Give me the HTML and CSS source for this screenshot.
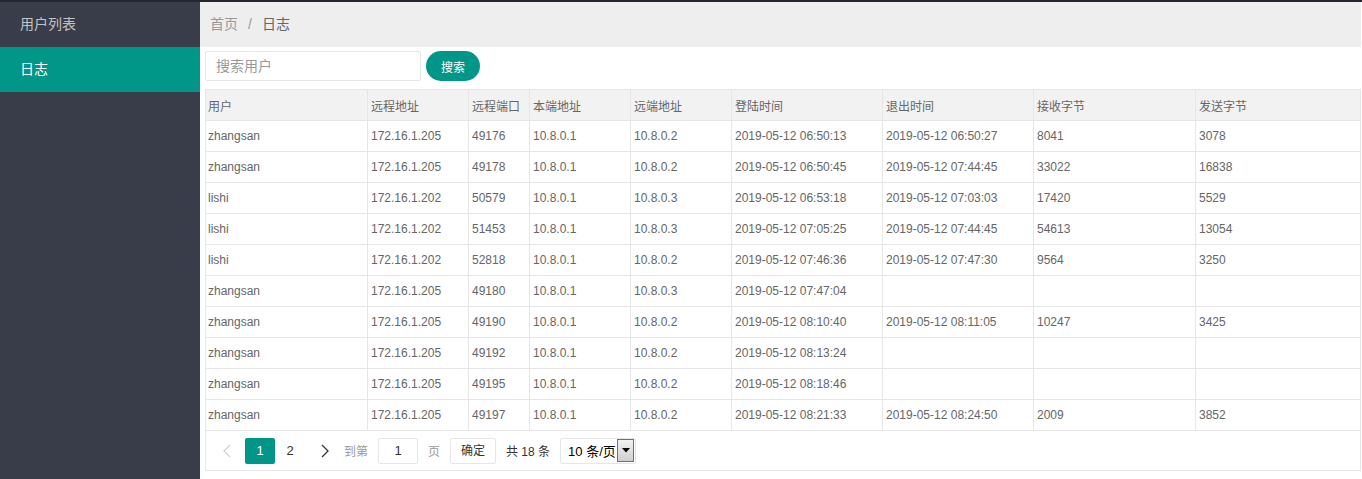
FILE: index.html
```html
<!DOCTYPE html>
<html lang="zh">
<head>
<meta charset="utf-8">
<title>日志</title>
<link rel="stylesheet" href="styles.css">
</head>
<body>
<div class="topbar"></div>
<div class="layout">
  <aside class="sidebar">
    <div class="nav-item">用户列表</div>
    <div class="nav-item active">日志</div>
  </aside>
  <main class="main">
    <div class="crumbs">
      <span class="crumb">首页</span><span class="sep">/</span><span class="crumb current">日志</span>
    </div>
    <div class="search">
      <input class="search-input" type="text" placeholder="搜索用户">
      <button class="search-btn">搜索</button>
    </div>
    <div class="table-wrap">
      <table class="grid">
        <colgroup>
          <col style="width:162px"><col style="width:101px"><col style="width:61px"><col style="width:101px"><col style="width:101px"><col style="width:151px"><col style="width:151px"><col style="width:162px"><col style="width:165px">
        </colgroup>
        <thead>
          <tr><th>用户</th><th>远程地址</th><th>远程端口</th><th>本端地址</th><th>远端地址</th><th>登陆时间</th><th>退出时间</th><th>接收字节</th><th>发送字节</th></tr>
        </thead>
        <tbody>
          <tr><td>zhangsan</td><td>172.16.1.205</td><td>49176</td><td>10.8.0.1</td><td>10.8.0.2</td><td>2019-05-12 06:50:13</td><td>2019-05-12 06:50:27</td><td>8041</td><td>3078</td></tr>
          <tr><td>zhangsan</td><td>172.16.1.205</td><td>49178</td><td>10.8.0.1</td><td>10.8.0.2</td><td>2019-05-12 06:50:45</td><td>2019-05-12 07:44:45</td><td>33022</td><td>16838</td></tr>
          <tr><td>lishi</td><td>172.16.1.202</td><td>50579</td><td>10.8.0.1</td><td>10.8.0.3</td><td>2019-05-12 06:53:18</td><td>2019-05-12 07:03:03</td><td>17420</td><td>5529</td></tr>
          <tr><td>lishi</td><td>172.16.1.202</td><td>51453</td><td>10.8.0.1</td><td>10.8.0.3</td><td>2019-05-12 07:05:25</td><td>2019-05-12 07:44:45</td><td>54613</td><td>13054</td></tr>
          <tr><td>lishi</td><td>172.16.1.202</td><td>52818</td><td>10.8.0.1</td><td>10.8.0.2</td><td>2019-05-12 07:46:36</td><td>2019-05-12 07:47:30</td><td>9564</td><td>3250</td></tr>
          <tr><td>zhangsan</td><td>172.16.1.205</td><td>49180</td><td>10.8.0.1</td><td>10.8.0.3</td><td>2019-05-12 07:47:04</td><td></td><td></td><td></td></tr>
          <tr><td>zhangsan</td><td>172.16.1.205</td><td>49190</td><td>10.8.0.1</td><td>10.8.0.2</td><td>2019-05-12 08:10:40</td><td>2019-05-12 08:11:05</td><td>10247</td><td>3425</td></tr>
          <tr><td>zhangsan</td><td>172.16.1.205</td><td>49192</td><td>10.8.0.1</td><td>10.8.0.2</td><td>2019-05-12 08:13:24</td><td></td><td></td><td></td></tr>
          <tr><td>zhangsan</td><td>172.16.1.205</td><td>49195</td><td>10.8.0.1</td><td>10.8.0.2</td><td>2019-05-12 08:18:46</td><td></td><td></td><td></td></tr>
          <tr><td>zhangsan</td><td>172.16.1.205</td><td>49197</td><td>10.8.0.1</td><td>10.8.0.2</td><td>2019-05-12 08:21:33</td><td>2019-05-12 08:24:50</td><td>2009</td><td>3852</td></tr>
        </tbody>
      </table>
      <div class="pager">
        <span class="pg-arrow prev"><svg width="10" height="14" viewBox="0 0 10 14"><polyline points="8,1 2,7 8,13" fill="none" stroke="#d2d2d2" stroke-width="1.3"/></svg></span>
        <span class="pg-num on">1</span>
        <span class="pg-num">2</span>
        <span class="pg-arrow next"><svg width="10" height="14" viewBox="0 0 10 14"><polyline points="2,1 8,7 2,13" fill="none" stroke="#333" stroke-width="1.3"/></svg></span>
        <span class="pg-label">到第</span>
        <span class="pg-input">1</span>
        <span class="pg-label">页</span>
        <span class="pg-btn">确定</span>
        <span class="pg-count">共 18 条</span>
        <span class="pg-select"><span class="pg-select-text">10 条/页</span><span class="pg-select-arrow"><svg width="8" height="5" viewBox="0 0 8 5"><polygon points="0,0 8,0 4,4.5" fill="#000"/></svg></span></span>
      </div>
    </div>
  </main>
</div>
</body>
</html>
```

FILE: styles.css
```css
* { box-sizing: border-box; }
html, body { margin: 0; padding: 0; }
body {
  font-family: "Liberation Sans", "Noto Sans CJK SC", sans-serif;
  color: #666;
  background: #fff;
  height: 479px;
  overflow: hidden;
}
.topbar { height: 2px; background: #23262e; }
.layout { display: flex; height: 477px; }
.sidebar { width: 200px; flex: none; background: #393d49; }
.nav-item {
  height: 45px;
  line-height: 45px;
  padding-left: 20px;
  font-size: 14px;
  color: rgba(255,255,255,.7);
}
.nav-item.active { background: #009688; color: #fff; }
.main { flex: 1; padding: 0 1px 0 0; min-width: 0; }
.crumbs {
  height: 45px;
  line-height: 44px;
  background: #eee;
  padding-left: 10px;
  font-size: 14px;
}
.crumb { color: #999; }
.crumb.current { color: #666; }
.sep { color: #999; margin: 0 10px; }
.search { display: flex; align-items: center; padding: 4px 0 0 5px; height: 34px; }
.search-input {
  width: 216px;
  height: 30px;
  border: 1px solid #e6e6e6;
  border-radius: 2px;
  padding: 0 10px;
  font-size: 14px;
  font-family: inherit;
  color: #333;
  outline: none;
}
.search-input::placeholder { color: #999; }
.search-btn {
  margin-left: 5px;
  width: 54px;
  height: 30px;
  border: none;
  border-radius: 15px;
  background: #009688;
  color: #fff;
  font-size: 12px;
  font-family: inherit;
  padding: 0;
}
.table-wrap { margin: 8px 0 0 5px; width: 1156px; }
.grid {
  border-collapse: collapse;
  table-layout: fixed;
  width: 1156px;
  font-size: 12px;
}
.grid th, .grid td {
  border: 1px solid #e6e6e6;
  height: 31px;
  padding: 0 3px;
  text-align: left;
  font-weight: normal;
  color: #666;
  white-space: nowrap;
  overflow: hidden;
}
.grid th:first-child, .grid td:first-child { padding-left: 2px; }
.grid th { background: #f2f2f2; }
.pager {
  height: 40px;
  border: 1px solid #e6e6e6;
  border-top: none;
  display: flex;
  align-items: center;
  padding-left: 6px;
  font-size: 12px;
  color: #333;
}
.pg-arrow { width: 30px; height: 26px; display: flex; align-items: center; justify-content: center; }
.pg-arrow.prev { margin-right: 3px; }
.pg-arrow.next { margin-left: 5px; }
.pg-num {
  width: 30px; height: 26px; line-height: 26px; text-align: center;
  font-size: 13px; color: #333;
}
.pg-num.on { background: #009688; color: #fff; border-radius: 2px; }
.pg-label { color: #999; font-size: 12px; margin-left: 4px; margin-right: 10px; }
.pg-input {
  width: 40px; height: 26px; line-height: 24px; text-align: center;
  border: 1px solid #e6e6e6; border-radius: 2px; font-size: 13px; color: #333;
  margin-right: 6px;
}
.pg-input + .pg-label { margin-left: 4px; }
.pg-btn {
  width: 46px; height: 26px; line-height: 24px; text-align: center;
  border: 1px solid #e6e6e6; border-radius: 2px; color: #333; font-size: 12px;
}
.pg-count { margin-left: 10px; margin-right: 10px; font-size: 12px; color: #333; }
.pg-select {
  width: 76px; height: 26px;
  border: 1px solid #e6e6e6; border-radius: 2px;
  display: flex; align-items: center;
  font-size: 13px; color: #000;
  padding: 0 1px 0 7px;
}
.pg-select-text { flex: 1; }
.pg-select-arrow {
  width: 17px; height: 23px;
  border: 1px solid #707070;
  background: linear-gradient(#f2f2f2, #cfcfcf);
  display: flex; align-items: center; justify-content: center;
}
```
